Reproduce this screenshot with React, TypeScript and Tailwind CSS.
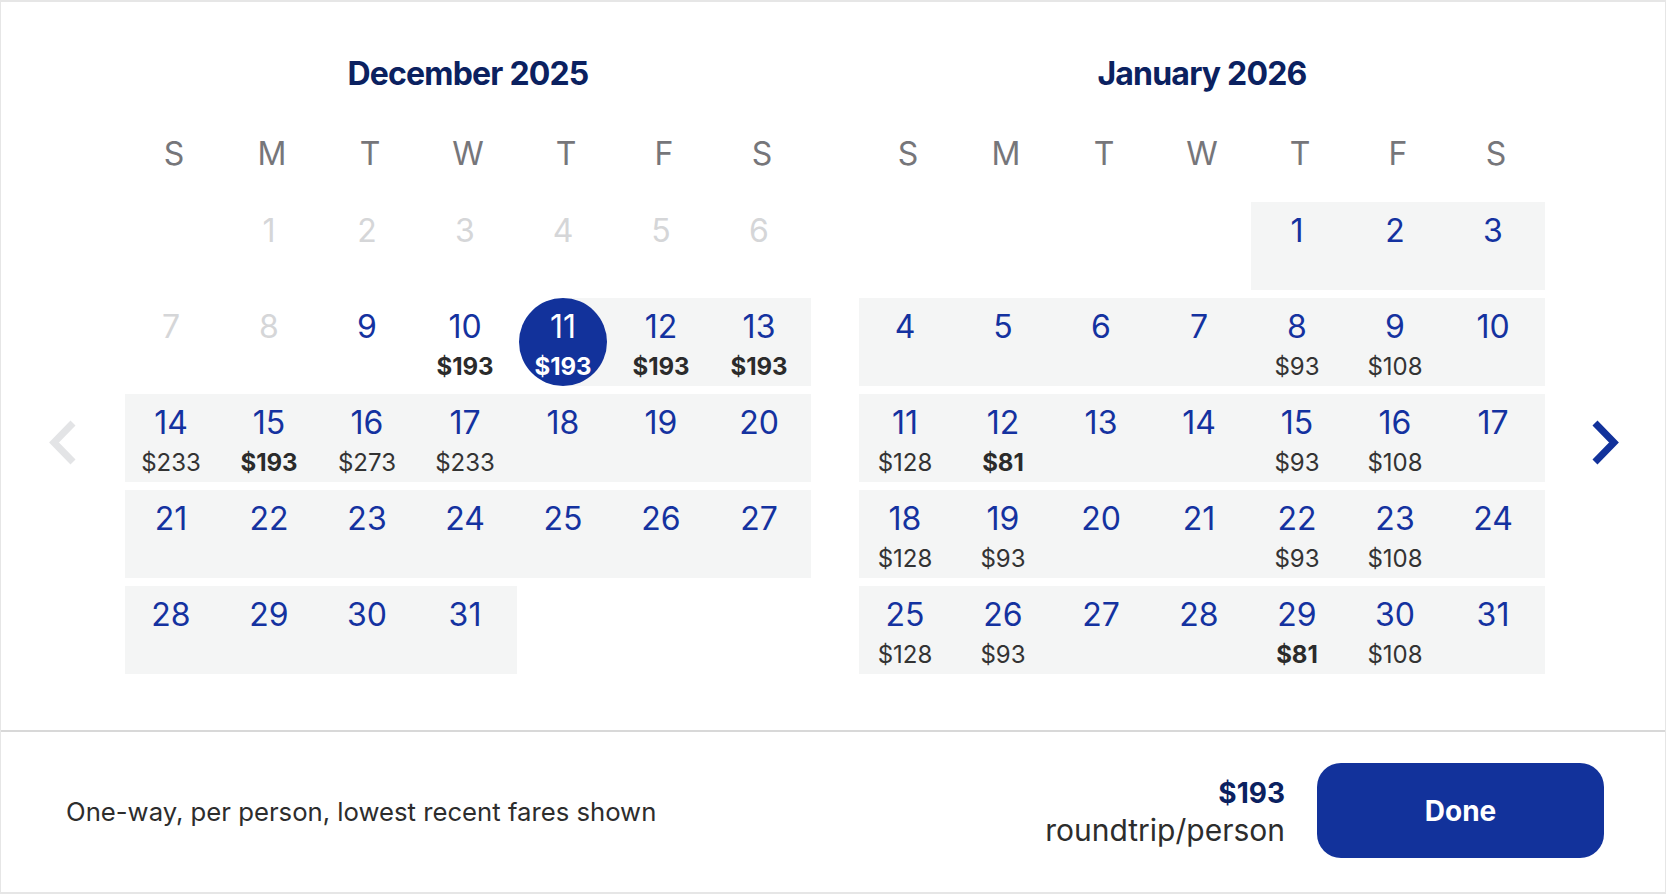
import React from 'react';

type Day = { d: number; price?: string; bold?: boolean } | null;

// prices by day of month
const decPrices: Record<number, [string, boolean]> = {
  10: ['$193', true],
  11: ['$193', true],
  12: ['$193', true],
  13: ['$193', true],
  14: ['$233', false],
  15: ['$193', true],
  16: ['$273', false],
  17: ['$233', false],
};

const janPrices: Record<number, [string, boolean]> = {
  8: ['$93', false],
  9: ['$108', false],
  11: ['$128', false],
  12: ['$81', true],
  15: ['$93', false],
  16: ['$108', false],
  18: ['$128', false],
  19: ['$93', false],
  22: ['$93', false],
  23: ['$108', false],
  25: ['$128', false],
  26: ['$93', false],
  29: ['$81', true],
  30: ['$108', false],
};

const buildWeeks = (offset: number, count: number, prices: Record<number, [string, boolean]>): Day[][] => {
  const cells: Day[] = [];
  for (let i = 0; i < offset; i++) cells.push(null);
  for (let d = 1; d <= count; d++) {
    const p = prices[d];
    cells.push(p ? { d, price: p[0], bold: p[1] } : { d });
  }
  while (cells.length % 7 !== 0) cells.push(null);
  const out: Day[][] = [];
  for (let i = 0; i < cells.length; i += 7) out.push(cells.slice(i, i + 7));
  return out;
};

const WEEKDAYS = ['S', 'M', 'T', 'W', 'T', 'F', 'S'];

const DayCell = ({
  day,
  band,
  disabled,
  selected,
}: {
  day: Day;
  band: boolean;
  disabled: boolean;
  selected: boolean;
}) => {
  if (!day) {
    return <div className={`h-[88px] ${band ? 'bg-[#f4f5f5]' : ''}`} />;
  }

  if (selected) {
    return (
      <div className="h-[88px] flex justify-center pr-[6px] bg-[linear-gradient(to_right,transparent_50%,#f4f5f5_50%)]">
        <div className="w-[88px] h-[88px] rounded-full bg-[#12329b] flex flex-col items-center pt-[9px] text-white">
          <span className="text-[32px] leading-[40px]">{day.d}</span>
          <span className="mt-[6px] text-[24px] leading-[28px] font-bold">{day.price}</span>
        </div>
      </div>
    );
  }

  return (
    <div className={`h-[88px] flex flex-col items-center pt-[9px] pr-[6px] ${band ? 'bg-[#f4f5f5]' : ''}`}>
      <span className={`text-[32px] leading-[40px] ${disabled ? 'text-[#d5d6d8]' : 'text-[#1432a0]'}`}>{day.d}</span>
      {day.price && (
        <span
          className={`mt-[6px] text-[24px] leading-[28px] ${day.bold ? 'font-bold text-[#2b2b2b]' : 'text-[#333333]'}`}
        >
          {day.price}
        </span>
      )}
    </div>
  );
};

const Month = ({
  title,
  weeks,
  isBand,
  isDisabled,
  isSelected,
}: {
  title: string;
  weeks: Day[][];
  isBand: (day: Day) => boolean;
  isDisabled: (day: Day) => boolean;
  isSelected: (day: Day) => boolean;
}) => (
  <div className="w-[686px] flex flex-col">
    <h2 className="text-center text-[32px] leading-[40px] font-bold text-[#0b2160] tracking-[-0.8px]">{title}</h2>
    <div className="grid grid-cols-7 mt-[40px]">
      {WEEKDAYS.map((w, i) => (
        <div key={i} className="text-center text-[32px] leading-[40px] text-[#76767a]">
          {w}
        </div>
      ))}
    </div>
    <div className="flex flex-col gap-[8px] mt-[28px]">
      {weeks.map((week, r) => (
        <div key={r} className="grid grid-cols-7">
          {week.map((day, c) => (
            <DayCell
              key={c}
              day={day}
              band={isBand(day)}
              disabled={isDisabled(day)}
              selected={isSelected(day)}
            />
          ))}
        </div>
      ))}
    </div>
  </div>
);

const Chevron = ({ dir, color }: { dir: 'left' | 'right'; color: string }) => (
  <svg width="30" height="47" viewBox="0 0 30 47" fill="none">
    {dir === 'left' ? (
      <polyline points="25,4 6,23.5 25,43" stroke={color} strokeWidth="7" strokeLinejoin="miter" />
    ) : (
      <polyline points="5,4 24,23.5 5,43" stroke={color} strokeWidth="7" strokeLinejoin="miter" />
    )}
  </svg>
);

export default function App() {
  const decWeeks = buildWeeks(1, 31, decPrices);
  const janWeeks = buildWeeks(4, 31, janPrices);

  return (
    <div className="w-[1666px] h-[894px] bg-white border border-[#e6e6e6] border-t-2 border-b-2 flex flex-col font-['Inter','Liberation_Sans',sans-serif] overflow-hidden">
      {/* Calendars */}
      <div className="h-[728px] flex">
        <div className="w-[124px] flex items-center justify-center pt-[152px]">
          <Chevron dir="left" color="#e3e4e6" />
        </div>
        <div className="flex gap-[48px] pt-[52px]">
          <Month
            title="December 2025"
            weeks={decWeeks}
            isBand={(day) => !!day && day.d >= 12}
            isDisabled={(day) => !!day && day.d <= 8}
            isSelected={(day) => !!day && day.d === 11}
          />
          <Month
            title="January 2026"
            weeks={janWeeks}
            isBand={(day) => !!day}
            isDisabled={() => false}
            isSelected={() => false}
          />
        </div>
        <div className="flex-1 flex items-center justify-center pt-[152px]">
          <Chevron dir="right" color="#12329b" />
        </div>
      </div>

      {/* Footer */}
      <div className="border-t-2 border-[#d8d8d8] flex-1 flex items-center justify-between pl-[65px] pr-[61px]">
        <p className="text-[25.7px] leading-[32px] text-[#2d2d2d]">One-way, per person, lowest recent fares shown</p>
        <div className="flex items-center gap-[32px]">
          <div className="flex flex-col items-end">
            <span className="text-[28px] leading-[36px] font-bold text-[#0b2160]">$193</span>
            <span className="text-[30px] leading-[38px] text-[#2d2d2d]">roundtrip/person</span>
          </div>
          <button className="w-[287px] h-[95px] mb-[3px] rounded-[24px] bg-[#12329b] text-white text-[28px] font-bold">
            Done
          </button>
        </div>
      </div>
    </div>
  );
}
